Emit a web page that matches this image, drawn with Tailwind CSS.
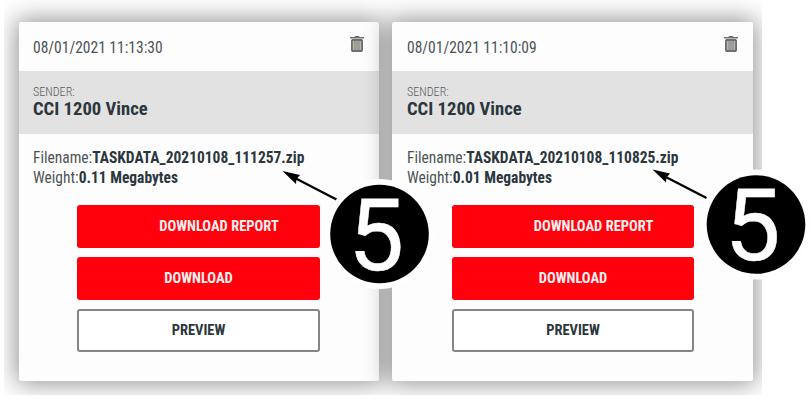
<!DOCTYPE html>
<html lang="en">
<head>
<meta charset="utf-8">
<title>Received files</title>
<script src="https://cdn.jsdelivr.net/npm/@tailwindcss/browser@4"></script>
</head>
<body class="relative h-[400px] w-[811px] overflow-hidden bg-white font-['Roboto_Condensed',Roboto,sans-serif] text-[#2b363d]">
<main class="ml-1 flex h-[395px] w-[758px] gap-[13px] overflow-hidden pl-[15px] pt-[22px]">
  <article class="h-[359px] w-[360px] shrink-0 rounded-[2px] bg-[#fdfdfd] shadow-[0_0_24px_3px_rgba(0,0,0,0.42)]">
    <header class="flex h-[49px] items-center justify-between pl-[14px] pr-[15px]">
      <time class="origin-left scale-x-[0.97] whitespace-nowrap pt-[3px] text-[16px] text-[#4c5357]">08/01/2021 11:13:30</time>
      <svg class="mb-[5px] h-4 w-[14px]" viewBox="0 0 14 16"><path d="M0 1h4.500L5 0h4l.5 1H14v1.500H0z" fill="#70706f"/><rect x="1.900" y="4" width="10.200" height="11" rx=".8" fill="#b4b6a9" stroke="#6d6d6f" stroke-width="1.800"/><path d="M5 4v11M7 4v11M9 4v11" stroke="#7c7c76" stroke-width=".8"/></svg>
    </header>
    <section class="h-[63px] bg-[#e2e2e2] pl-[14px] pt-[13px]">
      <p class="w-max origin-left scale-x-[0.93] text-[13px] font-light leading-[15px] text-[#565b5e]">SENDER:</p>
      <h2 class="w-max origin-left scale-x-[1.035] text-[18px] font-bold leading-[20px]">CCI 1200 Vince</h2>
    </section>
    <section class="pl-[14px] pt-[14px] text-[16px] leading-[20px]">
      <p class="w-max origin-left scale-x-[0.967] text-[#4c5357]">Filename:<b class="text-[#2b363d]">TASKDATA_20210108_111257.zip</b></p>
      <p class="w-max origin-left scale-x-[0.967] text-[#4c5357]">Weight:<b class="text-[#2b363d]">0.11 Megabytes</b></p>
    </section>
    <div class="ml-[58px] mt-[17px] flex w-[243px] flex-col gap-[9px] text-[14.5px] font-bold">
      <button class="flex h-[43px] items-center justify-center rounded-[3px] bg-[#ff000c] pl-[41px] text-[#fff0f0]">DOWNLOAD REPORT</button>
      <button class="flex h-[43px] items-center justify-center rounded-[3px] bg-[#ff000c] pt-px text-[#fff0f0]">DOWNLOAD</button>
      <button class="flex h-[43px] items-center justify-center rounded-[3px] border-2 border-[#858585] bg-white pt-px">PREVIEW</button>
    </div>
  </article>
  <article class="h-[359px] w-[361px] shrink-0 rounded-[2px] bg-[#fdfdfd] shadow-[0_0_24px_3px_rgba(0,0,0,0.42)]">
    <header class="flex h-[49px] items-center justify-between pl-[15px] pr-[15px]">
      <time class="origin-left scale-x-[0.97] whitespace-nowrap pt-[3px] text-[16px] text-[#4c5357]">08/01/2021 11:10:09</time>
      <svg class="mb-[5px] h-4 w-[14px]" viewBox="0 0 14 16"><path d="M0 1h4.500L5 0h4l.5 1H14v1.500H0z" fill="#70706f"/><rect x="1.900" y="4" width="10.200" height="11" rx=".8" fill="#b4b4b4" stroke="#6d6d6f" stroke-width="1.800"/><path d="M5 4v11M7 4v11M9 4v11" stroke="#7c7c7c" stroke-width=".8"/></svg>
    </header>
    <section class="h-[63px] bg-[#e2e2e2] pl-[15px] pt-[13px]">
      <p class="w-max origin-left scale-x-[0.93] text-[13px] font-light leading-[15px] text-[#565b5e]">SENDER:</p>
      <h2 class="w-max origin-left scale-x-[1.035] text-[18px] font-bold leading-[20px]">CCI 1200 Vince</h2>
    </section>
    <section class="pl-[15px] pt-[14px] text-[16px] leading-[20px]">
      <p class="w-max origin-left scale-x-[0.967] text-[#4c5357]">Filename:<b class="text-[#2b363d]">TASKDATA_20210108_110825.zip</b></p>
      <p class="w-max origin-left scale-x-[0.967] text-[#4c5357]">Weight:<b class="text-[#2b363d]">0.01 Megabytes</b></p>
    </section>
    <div class="ml-[60px] mt-[17px] flex w-[242px] flex-col gap-[9px] text-[14.5px] font-bold">
      <button class="flex h-[43px] items-center justify-center rounded-[3px] bg-[#ff000c] pl-[41px] text-[#fff0f0]">DOWNLOAD REPORT</button>
      <button class="flex h-[43px] items-center justify-center rounded-[3px] bg-[#ff000c] pt-px text-[#fff0f0]">DOWNLOAD</button>
      <button class="flex h-[43px] items-center justify-center rounded-[3px] border-2 border-[#858585] bg-white pt-px">PREVIEW</button>
    </div>
  </article>
</main>
<!-- Numbered callouts and their arrows, drawn over the cards -->
<svg class="absolute left-0 top-0 h-[400px] w-[811px]" viewBox="0 0 811 400">
  <g id="callout">
    <path d="M292 176.500L336.500 199.500" stroke="#000" stroke-width="2.300"/>
    <path d="M282.500 171L300 175L296.500 179L296 184Z"/>
  </g>
  <use href="#callout" x="370" y="-1.500"/>
  <circle cx="379.500" cy="234" r="55" fill="#fefefe"/><circle cx="379.500" cy="234" r="49.300"/>
  <circle cx="756" cy="224.500" r="55" fill="#fefefe"/><circle cx="756" cy="224.500" r="49.300"/>
  <g class="font-['Roboto',sans-serif] text-[100px]" fill="#fff" stroke="#fff" stroke-width=".4" text-anchor="middle"><text x="376" y="269.700">5</text><text x="752.500" y="259.700">5</text></g>
</svg>
</body>
</html>
